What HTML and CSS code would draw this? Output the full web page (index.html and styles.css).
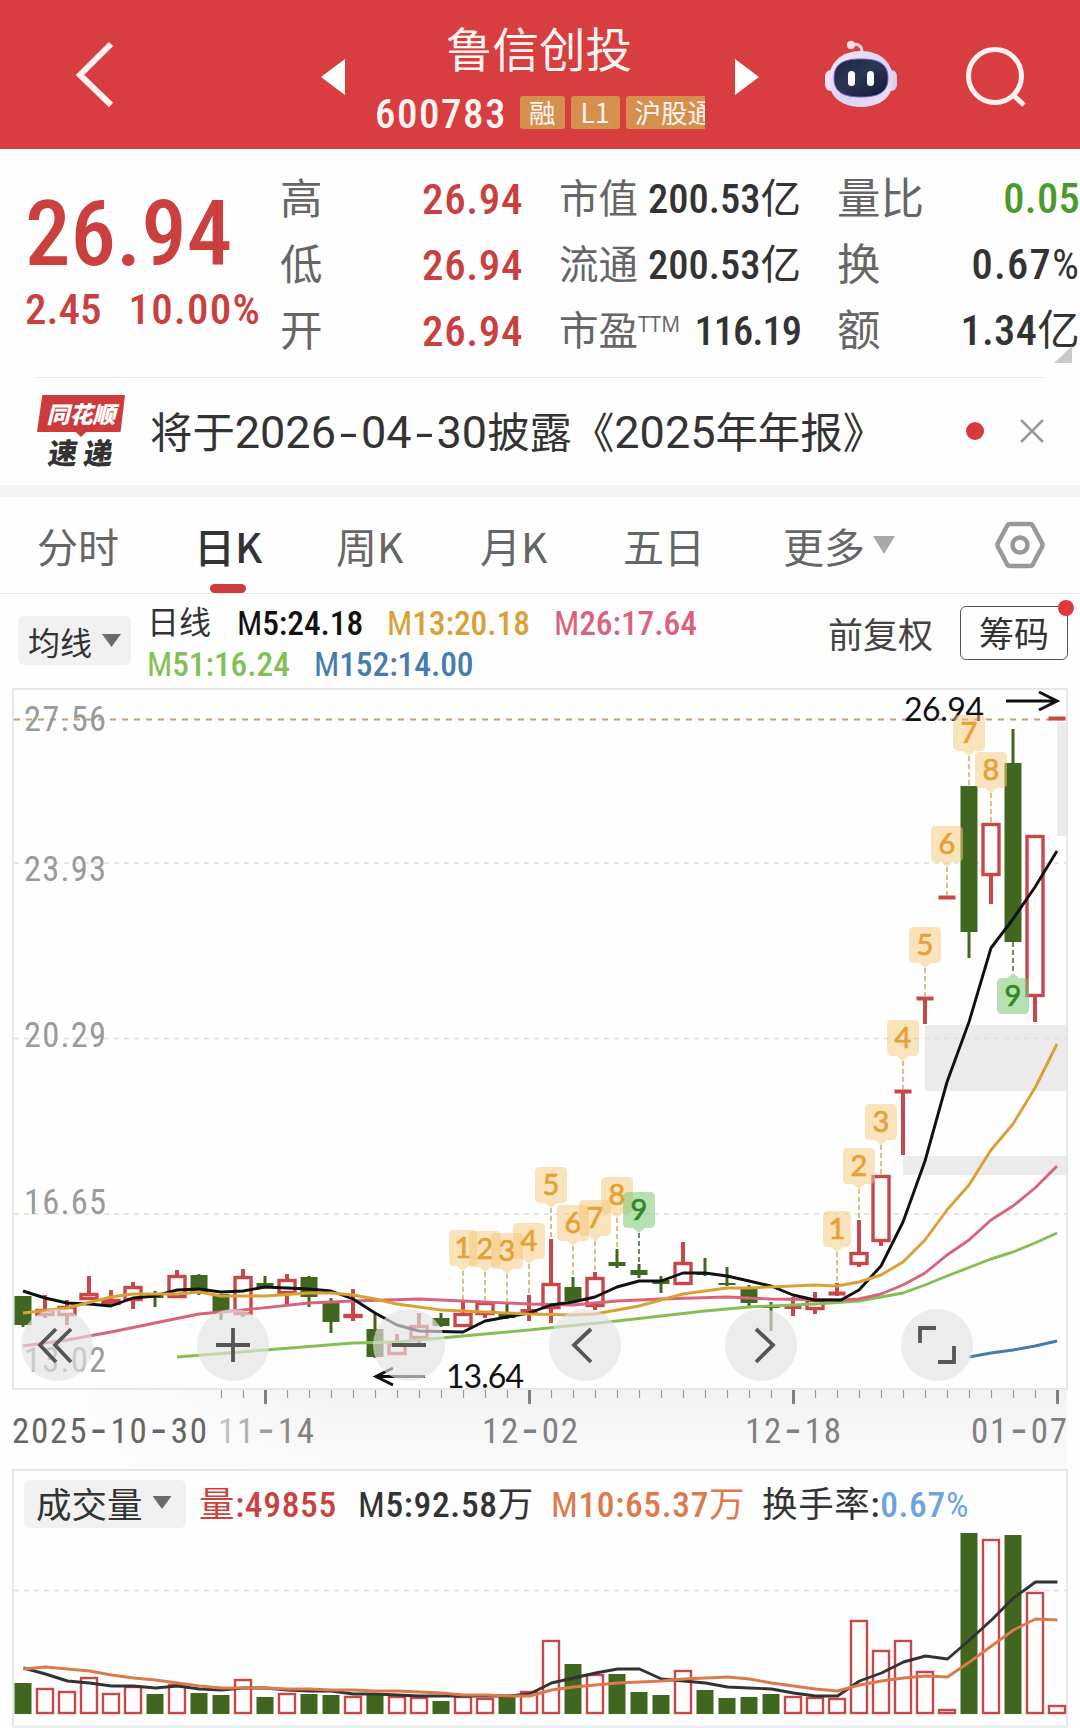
FILE: index.html
```html
<!DOCTYPE html>
<html lang="zh-CN">
<head>
  <meta charset="UTF-8" />
  <meta name="viewport" content="width=1080" />
  <title>鲁信创投 600783</title>
  <link rel="stylesheet" href="styles.css">
</head>
<body>
  <header class="topbar">
    <svg class="back" width="44" height="76" viewBox="0 0 44 76"><path d="M40 7 L9 38 L40 68" /></svg>
    <svg class="prev" width="24" height="36" viewBox="0 0 24 36"><path d="M24 0 V36 L0 18 Z" /></svg>
    <div class="stock">
      <h1>鲁信创投</h1>
      <div class="code-row">
        <span class="code">600783</span>
        <span class="tag">融</span>
        <span class="tag tag-l1">L1</span>
        <span class="tag">沪股通</span>
      </div>
    </div>
    <svg class="next" width="24" height="36" viewBox="0 0 24 36"><path d="M0 0 V36 L24 18 Z" /></svg>
    <svg class="robot" width="72" height="68" viewBox="0 0 72 68">
      <defs>
        <linearGradient id="shell" x1="0" y1="0" x2="1" y2="1">
          <stop offset="0" stop-color="#fbe9ee" />
          <stop offset=".55" stop-color="#d9d3f6" />
          <stop offset="1" stop-color="#f3dfea" />
        </linearGradient>
        <linearGradient id="face" x1="0" y1="0" x2="1" y2="1">
          <stop offset="0" stop-color="#1b2440" />
          <stop offset=".45" stop-color="#2c3653" />
          <stop offset="1" stop-color="#12163a" />
        </linearGradient>
      </defs>
      <path d="M26 5 C33 3 37 6 37 12" fill="none" stroke="#f9d5d8" stroke-width="3" />
      <circle cx="26" cy="5" r="4.2" fill="#f9dfe1" />
      <rect x="0" y="30" width="12" height="21" rx="6" fill="#f6e3ee" />
      <rect x="60" y="30" width="12" height="21" rx="6" fill="#d8cdf3" />
      <path d="M36 11 C56 11 68 23 68 40 C68 58 54 67 36 67 C18 67 4 58 4 40 C4 23 16 11 36 11 Z" fill="url(#shell)" />
      <path d="M36 19 C54 19 63 24 63 38 C63 52 54 57 36 57 C18 57 9 52 9 38 C9 24 18 19 36 19 Z" fill="url(#face)" stroke="#7a5fd0" stroke-width="1" />
      <rect x="23" y="31" width="7" height="15" rx="3.5" fill="#fff" />
      <rect x="42" y="31" width="7" height="15" rx="3.5" fill="#fff" />
    </svg>
    <svg class="search" width="62" height="62" viewBox="0 0 62 62"><circle cx="30" cy="30" r="26.5" /><path d="M48 49 L59 59" /></svg>
  </header>

  <section class="quote">
    <div class="price">
      <div class="last">26.94</div>
      <div class="change"><span>2.45</span><span>10.00%</span></div>
    </div>
    <dl class="stats stats-a">
      <div><dt>高</dt><dd class="red">26.94</dd></div>
      <div><dt>低</dt><dd class="red">26.94</dd></div>
      <div><dt>开</dt><dd class="red">26.94</dd></div>
    </dl>
    <dl class="stats stats-b">
      <div><dt>市值</dt><dd>200.53<u>亿</u></dd></div>
      <div><dt>流通</dt><dd>200.53<u>亿</u></dd></div>
      <div><dt>市盈<sup>TTM</sup></dt><dd class="tight">116.19</dd></div>
    </dl>
    <dl class="stats stats-c">
      <div><dt>量比</dt><dd class="green">0.05</dd></div>
      <div><dt>换</dt><dd class="wide">0.67<u>%</u></dd></div>
      <div><dt>额</dt><dd>1.34<u>亿</u></dd></div>
    </dl>
    <i class="corner"></i>
  </section>

  <section class="news">
    <div class="logo">
      <b class="logo-top">同花顺</b>
      <b class="logo-bottom">速 递</b>
    </div>
    <p>将于<span>2026<i>-</i>04<i>-</i>30</span>披露《<span>2025</span>年年报》</p>
    <i class="dot"></i>
    <svg class="close" width="24" height="24" viewBox="0 0 24 24"><path d="M1 1 L23 23 M23 1 L1 23" /></svg>
  </section>

  <nav class="tabs">
    <a>分时</a>
    <a class="active">日K</a>
    <a>周K</a>
    <a>月K</a>
    <a>五日</a>
    <a>更多</a>
    <i class="caret"></i>
    <svg class="hex" width="50" height="48" viewBox="0 0 50 48"><path d="M15 3 H35 Q37 3 38 5 L47 22 Q48 24 47 26 L38 43 Q37 45 35 45 H15 Q13 45 12 43 L3 26 Q2 24 3 22 L12 5 Q13 3 15 3 Z" /><circle cx="25" cy="24" r="7.5" /></svg>
  </nav>

  <section class="ma">
    <div class="picker">均线<i class="caret"></i></div>
    <div class="ma-values">
      <div class="ma-line"><span class="kind">日线</span><span class="m5"><u>M</u>5:24.18</span><span class="m13"><u>M</u>13:20.18</span><span class="m26"><u>M</u>26:17.64</span></div>
      <div class="ma-line"><span class="m51"><u>M</u>51:16.24</span><span class="m152"><u>M</u>152:14.00</span></div>
    </div>
    <span class="adjust">前复权</span>
    <div class="chips">筹码<i></i></div>
  </section>

  <section class="kline">
    <svg id="kline" width="1080" height="781" viewBox="0 688 1080 781"></svg>
    <div class="tools">
      <button><svg viewBox="0 0 72 72"><path d="M35 20 L19 36 L35 53 M50 20 L34 36 L50 53" /></svg></button>
      <button><svg viewBox="0 0 72 72"><path d="M36 19 V53 M19 36 H53" /></svg></button>
      <button><svg viewBox="0 0 72 72"><path d="M19 36 H53" /></svg></button>
      <button><svg viewBox="0 0 72 72"><path d="M42 20 L25 36 L42 53" /></svg></button>
      <button><svg viewBox="0 0 72 72"><path d="M31 20 L48 36 L31 53" /></svg></button>
      <button><svg viewBox="0 0 72 72"><path d="M19 34 V19 H35 M37 53 H53 V37" /></svg></button>
    </div>
  </section>

  <section class="volume">
    <div class="vol-head">
      <div class="picker">成交量<i class="caret"></i></div>
      <span class="vol"><u>量</u>:49855</span>
      <span class="vm5"><u>M</u>5:92.58<u>万</u></span>
      <span class="vm10"><u>M</u>10:65.37<u>万</u></span>
      <span class="turn"><u>换手率</u>:<em>0.67<u>%</u></em></span>
    </div>
    <svg id="volume" width="1080" height="195" viewBox="0 1533 1080 195"></svg>
  </section>

  <script src="app.js"></script>
</body>
</html>
```
FILE: styles.css
```css
* {
  box-sizing: border-box;
}

body {
  margin: 0;
  width: 1080px;
  height: 1728px;
  overflow: hidden;
  background: #fefefe;
  color: #333;
  font-family: 'Roboto Condensed', 'Noto Sans CJK SC', sans-serif;
  white-space: nowrap;
}

h1, p, dl, dt, dd {
  margin: 0;
  font-weight: 400;
}

i, em {
  font-style: normal;
}

/* light letters and units next to the heavier digits */
u {
  text-decoration: none;
  font-weight: 400;
}

svg {
  display: block;
  flex: none;
}

.red { color: #c9403e; }
.green { color: #4a9a2b; }

.caret {
  width: 19px;
  height: 13px;
  background: #6b6b6b;
  clip-path: polygon(0 0, 100% 0, 50% 100%);
}

/* top bar */
.topbar {
  display: flex;
  align-items: flex-start;
  height: 149px;
  background: #d83d3f;
  color: #fff4f1;
}
.back {
  margin: 37px 0 0 71px;
  fill: none;
  stroke: #fff1ee;
  stroke-width: 6;
}
.prev {
  margin: 59px 0 0 206px;
  fill: #fff;
}
.stock {
  width: 330px;
  margin-left: 30px;
  overflow: hidden;
}
.stock h1 {
  margin-left: 71px;
  height: 96px;
  padding-top: 17px;
  font-size: 46.5px;
  line-height: 68px;
}
.code-row {
  display: flex;
  gap: 6px;
}
.code {
  flex: none;
  width: 139px;
  font-size: 41px;
  font-weight: 500;
  line-height: 36px;
  letter-spacing: 1.5px;
}
.tag {
  flex: none;
  height: 33px;
  padding: 0 9px;
  border-radius: 3px;
  background: #d6904e;
  font-family: 'Noto Sans CJK SC', sans-serif;
  font-size: 26.5px;
  line-height: 32px;
}
.tag-l1 {
  padding: 0 10px;
}
.next {
  margin: 59px 0 0 30px;
  fill: #fff;
}
.robot {
  margin: 40px 0 0 66px;
}
.search {
  margin: 46px 0 0 68px;
  fill: none;
  stroke: #fff1ee;
  stroke-width: 5;
}

/* quote */
.quote {
  position: relative;
  display: flex;
  height: 228px;
  padding-top: 16px;
}
.price {
  width: 255px;
  margin-left: 25px;
  color: #c9403e;
  font-weight: 500;
}
.last {
  height: 120px;
  padding-top: 15px;
  font-size: 91px;
  line-height: 108px;
}
.change {
  display: flex;
  gap: 27px;
  font-size: 43px;
  line-height: 48px;
}
.change span:last-child {
  letter-spacing: 1.2px;
}
.stats div {
  display: flex;
  justify-content: space-between;
  align-items: center;
  height: 66px;
}
.stats dt {
  padding-top: 2px;
  color: #666;
  font-size: 42.5px;
  line-height: 63px;
}
.stats dd {
  padding-top: 1px;
  font-size: 43px;
  font-weight: 500;
  letter-spacing: .6px;
  line-height: 64px;
}
.stats-a { width: 243px; }
.stats-b {
  width: 242px;
  margin-left: 36px;
}
.stats-b dt { font-size: 39.5px; }
.stats-b dd {
  font-size: 40.5px;
  letter-spacing: 0;
}
.stats-b .tight { letter-spacing: -1px; }
.stats-c {
  width: 243px;
  margin-left: 36px;
}
.stats-c dt { font-size: 43.5px; }
.stats-c dd {
  font-size: 42.5px;
  letter-spacing: .3px;
}
.stats-c .wide { letter-spacing: 1.2px; }
sup {
  font-family: 'Open Sans', sans-serif;
  font-size: 21px;
  line-height: 0;
  vertical-align: 13px;
}
.corner {
  position: absolute;
  right: 8px;
  bottom: 14px;
  width: 18px;
  height: 17px;
  background: #c9c9c9;
  clip-path: polygon(100% 0, 100% 100%, 0 100%);
}

/* news strip */
.news {
  display: flex;
  align-items: center;
  height: 120px;
  border-bottom: 12px solid #f4f4f4;
  background: linear-gradient(#ededed, #ededed) 34px 0 / 1012px 1px no-repeat;
}
.logo {
  width: 88px;
  margin: 0 0 2px 37px;
  text-align: center;
  font-family: 'Noto Sans CJK SC', sans-serif;
  font-weight: 900;
}
.logo b {
  display: block;
}
.logo-top {
  height: 43px;
  background: #cd3c3c;
  clip-path: polygon(6% 0, 100% 0, 95% 37px, 56% 37px, 50% 42px, 44% 37px, 0 37px);
  color: #fff;
  font-size: 23px;
  line-height: 37px;
  font-style: italic;
}
.logo-bottom {
  font-size: 29px;
  line-height: 27px;
  transform: skewX(-8deg);
}
.news p {
  width: 815px;
  margin-left: 25px;
  padding-top: 4px;
  font-size: 42.4px;
  line-height: 60px;
}
.news p span {
  font-family: Roboto, sans-serif;
  font-size: 45px;
}
.news p i {
  display: inline-block;
  width: 25px;
  text-align: center;
  font-size: 42px;
  transform: scaleX(1.5);
}
.dot {
  width: 18px;
  height: 18px;
  margin-left: 1px;
  border-radius: 50%;
  background: #d63a3a;
}
.close {
  margin-left: 36px;
  stroke: #999;
  stroke-width: 2.5;
}

/* tabs */
.tabs {
  display: flex;
  align-items: center;
  height: 97px;
  border-bottom: 1px solid #e9e9e9;
  color: #666;
  font-size: 41px;
}
.tabs a {
  position: relative;
  line-height: 95px;
  font-family: 'Noto Sans CJK SC', sans-serif;
}
.tabs a:nth-child(1) { margin-left: 37px; width: 157px; }
.tabs a:nth-child(2) { width: 142px; }
.tabs a:nth-child(3) { width: 144px; }
.tabs a:nth-child(4) { width: 143px; }
.tabs a:nth-child(5) { width: 160px; }
.tabs a:nth-child(6) { width: 90px; }
.tabs .active {
  color: #333;
  font-weight: 500;
}
.tabs .active::after {
  content: '';
  position: absolute;
  left: 16px;
  bottom: 0;
  width: 36px;
  height: 9px;
  border-radius: 5px;
  background: #cb3c3c;
}
.tabs .caret {
  width: 22px;
  height: 18px;
  background: #a9a9a9;
}
.hex {
  margin-left: 100px;
  fill: none;
  stroke: #999;
  stroke-width: 4.5;
}

/* moving averages */
.ma {
  display: flex;
  height: 94px;
}
.picker {
  display: flex;
  align-items: center;
  gap: 10px;
  border-radius: 6px;
  background: #f1f1f1;
}
.ma .picker {
  width: 113px;
  height: 49px;
  margin: 22px 0 0 18px;
  padding-left: 10px;
  font-size: 32px;
}
.ma-values {
  width: 681px;
  margin-left: 16px;
  padding-top: 9px;
  font-size: 33.5px;
  font-weight: 500;
  letter-spacing: -.1px;
}
.ma-line {
  display: flex;
  height: 41px;
  line-height: 41px;
}
.kind {
  width: 90px;
  font-size: 32px;
  font-weight: 400;
}
.m5 { width: 150px; color: #111; }
.m13 { width: 167px; color: #d9a033; }
.m26 { color: #d9627c; }
.m51 { width: 167px; color: #84bf53; }
.m152 { color: #467bae; }
.adjust {
  width: 132px;
  padding-top: 19px;
  font-size: 35px;
  line-height: 48px;
  color: #444;
}
.chips {
  position: relative;
  width: 108px;
  height: 54px;
  margin-top: 12px;
  border: 1px solid #555;
  border-radius: 6px;
  font-size: 35px;
  line-height: 57px;
  text-align: center;
}
.chips i {
  position: absolute;
  top: -7px;
  right: -7px;
  width: 16px;
  height: 16px;
  border-radius: 50%;
  background: #e0383c;
}

/* candles */
.kline {
  position: relative;
  height: 781px;
}
.tools {
  position: absolute;
  top: 621px;
  left: 21px;
  display: flex;
  gap: 104px;
}
.tools button {
  width: 72px;
  height: 72px;
  padding: 0;
  border: 0;
  border-radius: 50%;
  background: rgba(226, 226, 226, .66);
}
.tools path {
  fill: none;
  stroke: #555;
  stroke-width: 3.8;
}
.frame { fill: none; stroke: #e6e6e6; stroke-width: 2; }
.grid { stroke: #dedede; stroke-width: 1.3; stroke-dasharray: 5 5; }
.grid-last { stroke: #c2a070; stroke-width: 1.8; stroke-dasharray: 6 6; }
.gap { fill: #ebebeb; }
.up { fill: #fefefe; stroke: #c8474b; stroke-width: 3.4; }
.up-line { stroke: #c8474b; stroke-width: 4; }
.down { fill: #41661f; }
.down-line { stroke: #41661f; stroke-width: 3; }
.ma-path { fill: none; stroke-width: 2.9; stroke-linejoin: round; }
.axis { fill: #9a9a9a; font-size: 34.5px; }
.date { fill: #808080; font-size: 35px; }
.date tspan { font-family: 'Liberation Mono', monospace; font-size: 44px; letter-spacing: -3px; }
.first { fill: #666; }
.mark { fill: #111; font-family: Lato, sans-serif; font-size: 32px; }
.arrow { fill: none; stroke: #111; stroke-width: 3; }
.tick { stroke: #999; stroke-width: 1.2; }
.tick-big { stroke: #808080; stroke-width: 3; }
.flag { fill: #f5c77a; fill-opacity: .52; }
.flag-line { stroke: #c9a046; stroke-width: 1.3; stroke-dasharray: 5 3; }
.flag-text { fill: #e3a136; stroke: #e3a136; stroke-width: .7; font-family: Lato, sans-serif; font-size: 29px; text-anchor: middle; }
.nine { fill: #7cc973; fill-opacity: .55; }
.nine-line { stroke: #41661f; stroke-width: 1.5; stroke-dasharray: 5 3; }
.nine-text { fill: #2f8a22; stroke: #2f8a22; }

/* volume */
.vol-head {
  display: flex;
  align-items: center;
  width: 1056px;
  height: 64px;
  margin-left: 12px;
  padding-left: 12px;
  border: 2px solid #e6e6e6;
  border-bottom: 0;
  font-size: 35.5px;
  font-weight: 500;
  letter-spacing: .65px;
}
.vol-head > span {
  padding-top: 5px;
  line-height: 48px;
}
.vol-head .picker {
  width: 162px;
  height: 48px;
  margin: 4px 13px 0 -2px;
  padding: 0 0 3px 12px;
  font-size: 35.5px;
  font-weight: 400;
  letter-spacing: 0;
}
.vol { width: 159px; color: #c8423f; }
.vm5 { width: 193px; }
.vm10 { width: 211px; color: #dc7a4c; }
.turn em { color: #6ba5df; }
```
FILE: app.js
```js
const kline = document.getElementById('kline');
const volume = document.getElementById('volume');

const STEP = 22;
const X0 = 23.5;
const x = i => X0 + STEP * i;

function add(parent, tag, attrs, text) {
  const el = document.createElementNS('http://www.w3.org/2000/svg', tag);
  for (const k in attrs) el.setAttribute(k, attrs[k]);
  if (text) el.innerHTML = text;
  parent.appendChild(el);
  return el;
}

function line(parent, cls, x1, y1, x2, y2) {
  add(parent, 'line', { class: cls, x1, y1, x2, y2 });
}

// up/down, body top, body bottom, wick top, wick bottom
const candles = [
  ['d', 1296, 1325, 1296, 1327], ['u', 1309, 1316, 1295, 1318], ['u', 1306, 1316, 1300, 1325],
  ['u', 1293, 1300, 1276, 1300], ['u', 1299, 1305, 1290, 1305], ['u', 1286, 1301, 1282, 1309],
  ['d', 1296, 1298, 1291, 1307], ['u', 1275, 1298, 1270, 1298], ['d', 1275, 1292, 1274, 1295],
  ['d', 1294, 1312, 1294, 1320], ['u', 1276, 1315, 1269, 1317], ['d', 1283, 1288, 1276, 1288],
  ['u', 1279, 1294, 1274, 1304], ['d', 1277, 1297, 1276, 1307], ['d', 1303, 1322, 1298, 1333],
  ['u', 1314, 1318, 1289, 1321], ['d', 1329, 1357, 1314, 1358], ['u', 1343, 1355, 1334, 1355],
  ['u', 1325, 1339, 1313, 1344], ['d', 1318, 1326, 1313, 1327], ['u', 1313, 1327, 1302, 1327],
  ['u', 1302, 1315, 1302, 1318], ['d', 1313, 1318, 1304, 1319], ['u', 1310, 1312, 1295, 1321],
  ['u', 1283, 1309, 1239, 1323], ['d', 1287, 1301, 1277, 1301], ['u', 1277, 1307, 1272, 1310],
  ['d', 1262, 1266, 1249, 1268], ['d', 1270, 1275, 1264, 1278], ['d', 1280, 1284, 1276, 1293],
  ['u', 1262, 1285, 1242, 1285], ['d', 1273, 1275, 1258, 1276], ['d', 1283, 1285, 1267, 1286],
  ['d', 1288, 1303, 1285, 1308], ['d', 1306, 1308, 1302, 1331], ['u', 1306, 1308, 1297, 1316],
  ['u', 1299, 1310, 1292, 1314], ['u', 1292, 1295, 1283, 1296], ['u', 1252, 1265, 1220, 1267],
  ['u', 1175, 1242, 1175, 1246], ['u', 1091, 1092, 1091, 1155], ['u', 998, 999, 998, 1024],
  ['u', 897, 898, 897, 898], ['d', 786, 932, 786, 958], ['u', 823, 876, 824, 904],
  ['d', 763, 942, 729, 942], ['u', 835, 997, 835, 1022], ['u', 718, 719, 718, 719]
];

const averages = [
  ['#84bf53', '177,1357 265,1350 353,1343 397,1342 441,1338 485,1334 529,1330 617,1321 705,1311 749,1307 815,1304 859,1301 881,1297 903,1293 925,1285 947,1276 991,1259 1013,1252 1035,1243 1057,1233'],
  ['#d9627c', '23,1346 67,1340 111,1332 155,1323 199,1314 243,1310 309,1303 353,1301 419,1299 463,1301 529,1304 573,1305 617,1301 661,1299 727,1297 771,1299 841,1300 859,1299 881,1294 903,1285 925,1273 947,1255 969,1240 991,1220 1013,1206 1035,1188 1057,1166'],
  ['#111', '23,1291 45,1298 67,1303 89,1304 111,1306 133,1298 155,1296 177,1290 199,1289 221,1292 243,1291 265,1287 309,1289 331,1291 353,1299 375,1313 397,1325 419,1331 463,1332 485,1321 529,1313 551,1305 573,1302 595,1297 617,1287 639,1281 661,1281 683,1273 705,1273 727,1276 749,1281 771,1286 793,1295 815,1300 841,1300 859,1290 881,1266 903,1222 925,1161 947,1082 969,1022 991,948 1013,919 1035,887 1057,851'],
  ['#d9a033', '23,1313 67,1308 111,1297 133,1294 177,1294 199,1292 221,1296 265,1296 309,1293 331,1293 353,1295 375,1299 397,1304 441,1310 485,1312 529,1314 573,1315 595,1314 639,1306 683,1294 727,1288 749,1288 815,1285 837,1286 859,1282 881,1275 903,1262 925,1240 947,1210 969,1185 991,1150 1013,1124 1035,1088 1057,1044'],
  ['#467bae', '969,1357 991,1353 1013,1350 1035,1346 1057,1341']
];

// number, candle index, top of the flag, where its dashed line ends
const flags = [
  [1, 20, 1230, 1302], [2, 21, 1231, 1302], [3, 22, 1233, 1304], [4, 23, 1223, 1295], [5, 24, 1167, 1239],
  [6, 25, 1205, 1277], [7, 26, 1200, 1272], [8, 27, 1177, 1249], [9, 28, 1192, 1264],
  [1, 37, 1211, 1283], [2, 38, 1148, 1220], [3, 39, 1104, 1175], [4, 40, 1020, 1091], [5, 41, 927, 998],
  [6, 42, 826, 897], [7, 43, 715, 786], [8, 44, 752, 824], [9, 45, 978, 942]
];

function drawKline() {
  // date axis background, fades in from the left
  const defs = add(kline, 'defs', {});
  defs.innerHTML = '<linearGradient id="fade"><stop offset=".05" stop-color="#f3f3f3" stop-opacity="0"/><stop offset=".3" stop-color="#f3f3f3"/></linearGradient>' +
    '<linearGradient id="down" x2="0" y2="1"><stop offset="0" stop-color="#fff" stop-opacity="0"/><stop offset="1" stop-color="#fff" stop-opacity=".6"/></linearGradient>' +
    '<linearGradient id="text-fade" gradientUnits="userSpaceOnUse" x1="215" x2="300" y1="0" y2="0"><stop offset="0" stop-color="#ccc"/><stop offset="1" stop-color="#808080"/></linearGradient>';
  add(kline, 'rect', { x: 13, y: 1390, width: 1054, height: 79, fill: 'url(#fade)' });
  add(kline, 'rect', { x: 13, y: 1390, width: 1054, height: 79, fill: 'url(#down)' });

  add(kline, 'rect', { class: 'gap', x: 1057, y: 722, width: 10, height: 114 });
  add(kline, 'rect', { class: 'gap', x: 925, y: 1025, width: 142, height: 66 });
  add(kline, 'rect', { class: 'gap', x: 903, y: 1156, width: 164, height: 19 });
  add(kline, 'rect', { class: 'frame', x: 13, y: 689, width: 1054, height: 700 });
  [863, 1038.5, 1214].forEach(y => line(kline, 'grid', 14, y, 1066, y));
  line(kline, 'grid-last', 14, 719.5, 1066, 719.5);

  [['27.56', 731], ['23.93', 881], ['20.29', 1047], ['16.65', 1214], ['13.02', 1372]].forEach(([t, y]) =>
    add(kline, 'text', { class: 'axis', x: 24, y, textLength: 82 }, t));

  candles.forEach(([dir, top, bottom, high, low], i) => {
    const up = dir === 'u';
    const cx = x(i) - .5;
    line(kline, up ? 'up-line' : 'down-line', cx, high, cx, low);
    if (!up) add(kline, 'rect', { class: 'down', x: cx - 8.5, y: top, width: 17, height: bottom - top });
    else if (bottom - top < 4) line(kline, 'up-line', cx - 8.5, (top + bottom) / 2, cx + 8.5, (top + bottom) / 2);
    else add(kline, 'rect', { class: 'up', x: cx - 8, y: top + 1.5, width: 16, height: bottom - top - 3 });
  });

  averages.forEach(([stroke, points]) => add(kline, 'polyline', { class: 'ma-path', stroke, points }));

  add(kline, 'text', { class: 'mark', x: 904, y: 721, textLength: 80 }, '26.94');
  add(kline, 'path', { class: 'arrow', d: 'M1006 701 H1056 M1039 692 L1057 701 L1039 710' });
  add(kline, 'text', { class: 'mark', x: 446, y: 1388, textLength: 78 }, '13.64');
  add(kline, 'path', { class: 'arrow', d: 'M376 1376.5 H425 M393 1368 L376 1376.5 L393 1385' });

  flags.forEach(([n, i, y, end]) => {
    const cx = x(i) - .5;
    const w = n === 1 ? 14 : 16;
    const nine = n === 9 ? ' nine' : '';
    const below = end < y;
    const left = cx - w;
    const right = cx + w;
    const foot = y + 36;
    const tip = below
      ? `M${left + 5} ${y} H${cx - 6} L${cx} ${y - 5} L${cx + 6} ${y} H${right - 5}`
      : `M${left + 5} ${y} H${right - 5}`;
    const base = below
      ? `H${left + 5}`
      : `H${cx + 6} L${cx} ${foot + 5} L${cx - 6} ${foot} H${left + 5}`;
    line(kline, nine ? 'nine-line' : 'flag-line', cx, below ? end : foot + 5, cx, below ? y - 5 : end);
    add(kline, 'path', {
      class: 'flag' + nine,
      d: `${tip} Q${right} ${y} ${right} ${y + 5} V${foot - 5} Q${right} ${foot} ${right - 5} ${foot} ${base} Q${left} ${foot} ${left} ${foot - 5} V${y + 5} Q${left} ${y} ${left + 5} ${y} Z`
    });
    add(kline, 'text', { class: 'flag-text' + (nine && ' nine-text'), x: cx, y: y + 28 }, String(n));
  });

  for (let i = 9; i < candles.length; i++) {
    const big = i % 12 === 11;
    line(kline, big ? 'tick-big' : 'tick', x(i), 1390, x(i), big ? 1404 : 1398);
  }
  const dash = '<tspan dx="-3">-</tspan>';
  [[`2025${dash}10${dash}30`, 12, 195, 'first'], [`11${dash}14`, 218, 96, ''], [`12${dash}02`, 482, 96, ''],
    [`12${dash}18`, 745, 96, ''], [`01${dash}07`, 971, 96, '']].forEach(([t, left, len, cls], i) => {
    const el = add(kline, 'text', { class: 'date ' + cls, x: left, y: 1443, textLength: len }, t);
    if (i === 1) el.style.fill = 'url(#text-fade)';
  });
}

const BASE = 1714;
const bars = 'd1683 u1688 u1691 u1677 u1693 u1686 d1694 u1684 d1693 d1695 u1679 d1697 u1693 d1694 d1695 u1696 d1694 u1696 u1697 d1701 u1696 u1698 d1697 u1691 u1640 d1664 u1674 d1674 d1692 d1695 u1670 d1690 d1698 d1697 d1694 u1696 u1697 u1698 u1620 u1650 u1640 u1671 u1709 d1533 u1539 d1535 u1592 u1705'.split(' ');
const volM5 = [1668, 1674, 1681, 1683, 1686, 1686, 1688, 1686, 1689, 1690, 1688, 1688, 1690, 1691, 1691, 1694, 1694, 1695, 1696, 1696, 1696, 1696, 1696, 1694, 1683, 1678, 1673, 1669, 1669, 1679, 1681, 1683, 1687, 1688, 1689, 1693, 1696, 1696, 1681, 1673, 1662, 1656, 1659, 1640, 1620, 1598, 1582, 1582];
const volM10 = [1669, 1667, 1669, 1671, 1675, 1678, 1680, 1683, 1686, 1688, 1688, 1688, 1689, 1689, 1690, 1690, 1691, 1691, 1692, 1693, 1695, 1695, 1696, 1696, 1690, 1687, 1685, 1683, 1682, 1681, 1679, 1678, 1677, 1679, 1683, 1686, 1689, 1691, 1685, 1681, 1678, 1676, 1677, 1662, 1646, 1630, 1619, 1620];

function drawVolume() {
  line(volume, 'frame', 13, 1533, 13, 1726);
  line(volume, 'frame', 1067, 1533, 1067, 1726);
  line(volume, 'grid', 14, 1590.5, 1066, 1590.5);
  bars.forEach((bar, i) => {
    const top = Number(bar.slice(1));
    const cx = x(i) - .5;
    if (bar[0] === 'd') add(volume, 'rect', { class: 'down', x: cx - 8.5, y: top, width: 17, height: BASE - top });
    else add(volume, 'rect', { class: 'up', x: cx - 8, y: top + 1, width: 16, height: BASE - top - 2 }).style.strokeWidth = 2.4;
  });
  const path = ys => ys.map((y, i) => `${x(i)},${y}`).join(' ');
  add(volume, 'polyline', { class: 'ma-path', stroke: '#333', points: path(volM5) });
  add(volume, 'polyline', { class: 'ma-path', stroke: '#dc7a4c', points: path(volM10) });
  add(volume, 'rect', { x: 12, y: 1725.5, width: 1056, height: 3, fill: '#ebedef' });
}

drawKline();
drawVolume();
```
